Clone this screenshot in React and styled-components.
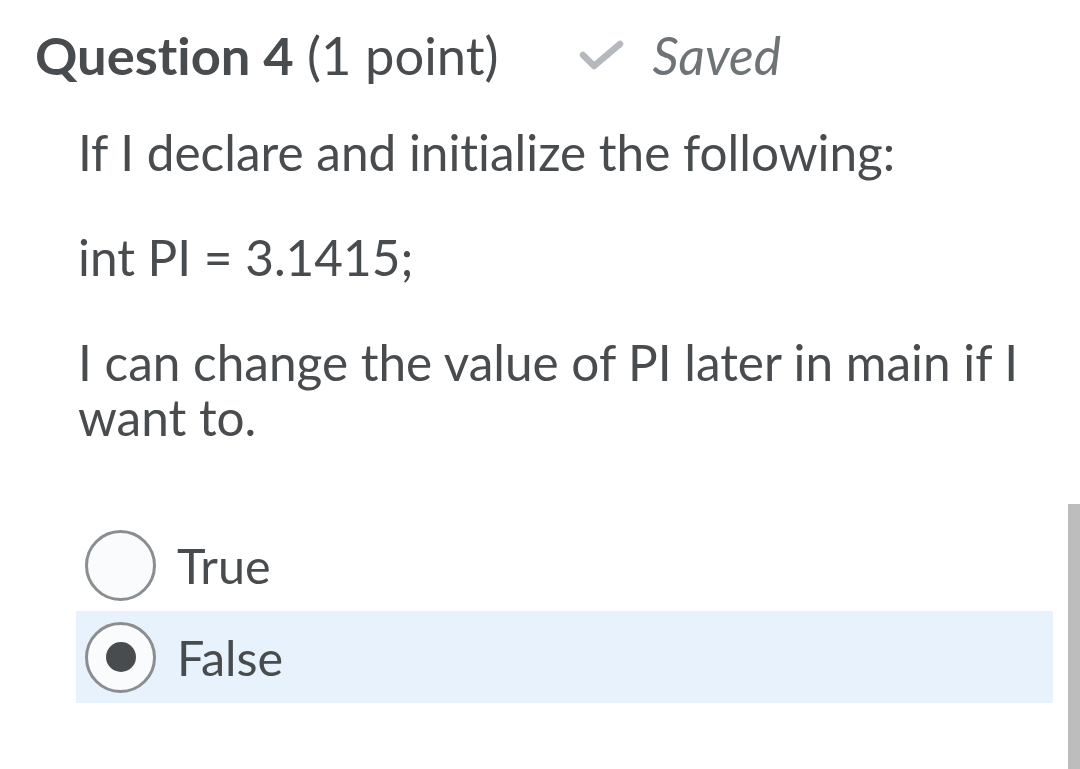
import React from "react";
import styled, { createGlobalStyle } from "styled-components";

const Global = createGlobalStyle`
  html, body { margin: 0; padding: 0; background: #ffffff; }
  body {
    font-family: Lato, "Noto Sans", sans-serif;
    color: #494c4e;
    overflow: hidden;
    font-variant-ligatures: none;
  }
`;

const Page = styled.div`
  position: relative;
  width: 1080px;
  height: 769px;
  overflow: hidden;
  background: #fff;
`;

const Header = styled.div`
  display: flex;
  align-items: center;
  padding: 23px 0 0 35px;
  height: 64px;
`;

const Title = styled.h2`
  margin: 0;
  font-size: 52.5px;
  font-weight: 400;
  line-height: 64px;
  color: #494c4e;
  white-space: nowrap;
`;

const Strong = styled.strong`
  font-weight: 700;
`;

const Status = styled.div`
  display: flex;
  align-items: center;
  margin-left: 80px;
  gap: 28px;
`;

const SavedText = styled.span`
  font-style: italic;
  font-size: 51.5px;
  line-height: 64px;
  color: #6e7376;
`;

const Body = styled.div`
  padding: 38px 0 0 78px;
  width: 960px;
`;

const Para = styled.p`
  margin: 0 0 ${(p) => p.$gap || 0}px 0;
  font-size: 49.5px;
  line-height: 55px;
  color: #494c4e;
`;

const Options = styled.div`
  margin-top: 74px;
  padding-left: 76px;
  width: 977px;
  display: flex;
  flex-direction: column;
`;

const Option = styled.label`
  display: flex;
  align-items: center;
  height: 92px;
  padding-left: 9px;
  gap: 21px;
  background: ${(p) => (p.$selected ? "#e8f2fc" : "transparent")};
  font-size: 48.5px;
  color: #494c4e;
`;

const Radio = styled.span`
  box-sizing: border-box;
  width: 71px;
  height: 71px;
  border-radius: 50%;
  border: 3px solid #8b8e90;
  background: #f9fbfd;
  display: flex;
  align-items: center;
  justify-content: center;
  flex: none;
`;

const Dot = styled.span`
  width: 30px;
  height: 30px;
  border-radius: 50%;
  background: #494c4e;
`;

const Scrollbar = styled.div`
  position: absolute;
  right: 0;
  top: 504px;
  width: 12px;
  bottom: 0;
  background: #bdbdbd;
`;

export default function App() {
  return (
    <Page>
      <Global />
      <Header>
        <Title>
          <Strong>Question 4</Strong> (1 point)
        </Title>
        <Status>
          <svg width="46" height="34" viewBox="0 0 46 34">
            <path
              d="M4 17 L15 28 L41 6"
              fill="none"
              stroke="#b5b9bd"
              strokeWidth="6.5"
              strokeLinecap="round"
              strokeLinejoin="round"
            />
          </svg>
          <SavedText>Saved</SavedText>
        </Status>
      </Header>
      <Body>
        <Para $gap={50}>If I declare and initialize the following:</Para>
        <Para $gap={50}>int PI = 3.1415;</Para>
        <Para>I can change the value of PI later in main if I want to.</Para>
      </Body>
      <Options>
        <Option>
          <Radio />
          True
        </Option>
        <Option $selected>
          <Radio>
            <Dot />
          </Radio>
          False
        </Option>
      </Options>
      <Scrollbar />
    </Page>
  );
}
